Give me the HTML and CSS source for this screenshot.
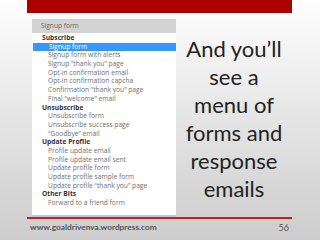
FILE: index.html
```html
<!DOCTYPE html>
<html lang="en">
<head>
    <meta charset="UTF-8">
    <title>Signup form menu</title>
    <link rel="stylesheet" href="styles.css">
</head>
<body>
    <div class="slide">
        <div class="topbar"></div>
        <div class="main">
            <div class="panel">
                <div class="panel-head">Signup form</div>
                <ul class="menu">
                    <li class="group">Subscribe</li>
                    <li class="item selected">Signup form</li>
                    <li class="item">Signup form with alerts</li>
                    <li class="item">Signup “thank you” page</li>
                    <li class="item">Opt-in confirmation email</li>
                    <li class="item">Opt-in confirmation capcha</li>
                    <li class="item">Confirmation “thank you” page</li>
                    <li class="item">Final “welcome” email</li>
                    <li class="group">Unsubscribe</li>
                    <li class="item">Unsubscribe form</li>
                    <li class="item">Unsubscribe success page</li>
                    <li class="item">“Goodbye” email</li>
                    <li class="group">Update Profile</li>
                    <li class="item">Profile update email</li>
                    <li class="item">Profile update email sent</li>
                    <li class="item">Update profile form</li>
                    <li class="item">Update profile sample form</li>
                    <li class="item">Update profile “thank you” page</li>
                    <li class="group">Other Bits</li>
                    <li class="item">Forward to a friend form</li>
                </ul>
            </div>
            <div class="side">
                <p>And you’ll<br>see a<br>menu of<br>forms and<br>response<br>emails</p>
            </div>
        </div>
        <div class="rule"></div>
        <footer>
            <span class="site">www.goaldrivenva.wordpress.com</span>
            <span class="page">56</span>
        </footer>
    </div>
</body>
</html>
```

FILE: styles.css
```css
body {
    margin: 0;
    font-family: "Open Sans", sans-serif;
}
.slide {
    width: 320px;
    height: 240px;
    overflow: hidden;
    background: linear-gradient(#fefefe, #f4f4f4 20%, #d6d6d6 80%, #cdcdcd);
}
.topbar {
    height: 13px;
    margin: 0 28px 0 27px;
    background: #aa0000;
}
.main {
    display: flex;
    height: 198px;
    margin-top: 6px;
}
.panel {
    width: 144px;
    margin-left: 32px;
    background: white;
    border-bottom: 2px solid #aecbef;
    box-sizing: border-box;
}
.panel-head {
    height: 14px;
    line-height: 14px;
    padding-left: 9px;
    font-size: 6.6px;
    color: #666;
    background: #d3d3d3;
}
.menu {
    list-style: none;
    margin: 0;
    padding: 1px 0 0;
}
.menu li {
    height: 8.7px;
    line-height: 8.7px;
    font-size: 6.7px;
    white-space: nowrap;
}
.group {
    padding-left: 10px;
    font-weight: bold;
    color: #333;
}
.item {
    padding-left: 16px;
    color: #707070;
}
.item.selected {
    margin-left: 1px;
    background: #3399ff;
    color: white;
}
.side {
    flex: 1;
    margin-right: 28px;
    text-align: center;
}
.side p {
    margin: 16px 0 0;
    font-family: Lato, sans-serif;
    font-size: 22px;
    line-height: 28px;
    color: #222;
}
.rule {
    height: 1.5px;
    margin: 0 28px 0 27px;
    background: #d21a1a;
}
footer {
    display: flex;
    justify-content: space-between;
    align-items: center;
    margin: 3px 31px 0 30px;
    font-family: Lato, sans-serif;
    color: #555;
}
.site {
    font-size: 8.3px;
    font-weight: bold;
}
.page {
    font-size: 9px;
}
```
